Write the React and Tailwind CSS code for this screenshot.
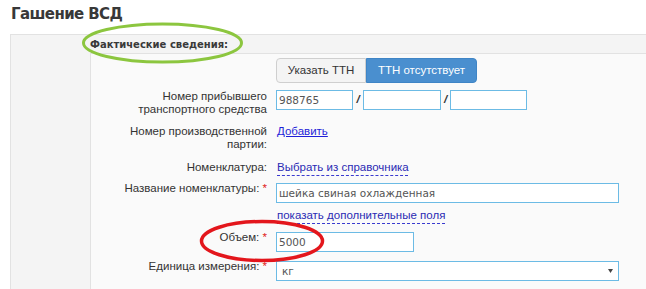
const dv = "font-['DejaVu_Sans',sans-serif]";
const inputCls = `h-[20px] border border-[#6cbbe5] bg-white pl-[2px] text-[10.5px] leading-[18px] text-[#555] ${dv}`;

function Label({ children, req }) {
  return (
    <div className="w-[176px] shrink-0 text-right leading-[13px] text-[#333]">
      {children}
      {req && <span className="text-[#e02020]"> *</span>}
    </div>
  );
}

export default function App() {
  return (
    <div className="relative w-[646px] h-[289px] overflow-hidden bg-white font-['Liberation_Sans',Arial,sans-serif] text-[11.5px]">
      <h1 className={`h-[34px] pl-[11px] pt-[5px] text-[15px] leading-[18px] font-bold tracking-[-0.6px] text-[#383838] ${dv}`}>
        Гашение ВСД
      </h1>
      <div className="ml-[10px] h-[260px] border-t border-l border-[#e2e2e2] bg-[#f4f4f4] pl-[79px]">
        <div className={`h-[18px] pt-[1px] text-[10px] leading-[18px] font-bold text-[#3a3a3a] ${dv}`}>
          Фактические сведения:
        </div>
        <div className="h-[240px] border-t border-l border-[#e2e2e2] bg-[#fafafa] pt-[4px]">
          <div className="flex pl-[185px]">
            <div className="flex h-[25px] w-[90px] items-center justify-center rounded-l-[4px] border border-[#cfcfcf] bg-[#f4f4f4] text-[#333]">
              Указать ТТН
            </div>
            <div className="flex h-[25px] w-[111px] items-center justify-center rounded-r-[4px] border border-[#3f85c6] bg-[#4a8fcf] text-white">
              ТТН отсутствует
            </div>
          </div>

          <div className="mt-[7px] flex">
            <Label>
              Номер прибывшего
              <br />
              транспортного средства
            </Label>
            <div className="ml-[9px] flex items-start">
              <div className={`${inputCls} w-[77px]`}>988765</div>
              <div className="w-[10px] text-center font-bold leading-[18px] text-[#333] italic">/</div>
              <div className={`${inputCls} w-[78px]`}></div>
              <div className="w-[9px] text-center font-bold leading-[18px] text-[#333] italic">/</div>
              <div className={`${inputCls} w-[77px]`}></div>
            </div>
          </div>

          <div className="mt-[9px] flex">
            <Label>
              Номер производственной
              <br />
              партии:
            </Label>
            <div className="ml-[10px] leading-[13px]">
              <span className="text-[#1f1fd8] underline underline-offset-1">Добавить</span>
            </div>
          </div>

          <div className="mt-[10px] flex">
            <Label>Номенклатура:</Label>
            <div className="ml-[10px] leading-[13px]">
              <span className="text-[#2a2ab4] underline decoration-dashed decoration-[#3a3ad0] underline-offset-[4px]">
                Выбрать из справочника
              </span>
            </div>
          </div>

          <div className="mt-[8px] flex">
            <Label req>Название номенклатуры:</Label>
            <div className={`${inputCls} ml-[9px] mt-[1px] w-[343px]`}>шейка свиная охлажденная</div>
          </div>

          <div className="mt-[6px] flex">
            <div className="w-[176px] shrink-0"></div>
            <div className="ml-[10px] leading-[13px]">
              <span className="text-[#2a2ab4] underline decoration-dashed decoration-[#3a3ad0] underline-offset-[4px]">
                показать дополнительные поля
              </span>
            </div>
          </div>

          <div className="mt-[9px] flex">
            <Label req>Объем:</Label>
            <div className={`${inputCls} ml-[9px] mt-[1px] w-[138px]`}>5000</div>
          </div>

          <div className="mt-[8px] flex">
            <Label req>Единица измерения:</Label>
            <div className={`${inputCls} ml-[9px] mt-[1px] flex w-[343px] items-center justify-between pl-[5px] pr-[5px]`}>
              <span>кг</span>
              <svg width="5" height="4" viewBox="0 0 5 4">
                <path d="M0 0 L5 0 L2.5 4 Z" fill="#444" />
              </svg>
            </div>
          </div>
        </div>
      </div>

      <svg className="pointer-events-none absolute left-0 top-0" width="646" height="289">
        <ellipse cx="162.5" cy="43" rx="79" ry="19" fill="none" stroke="#8cc63f" strokeWidth="3" />
        <ellipse cx="262" cy="241" rx="60.5" ry="19.5" fill="none" stroke="#e3161c" strokeWidth="3.5" />
      </svg>
    </div>
  );
}
